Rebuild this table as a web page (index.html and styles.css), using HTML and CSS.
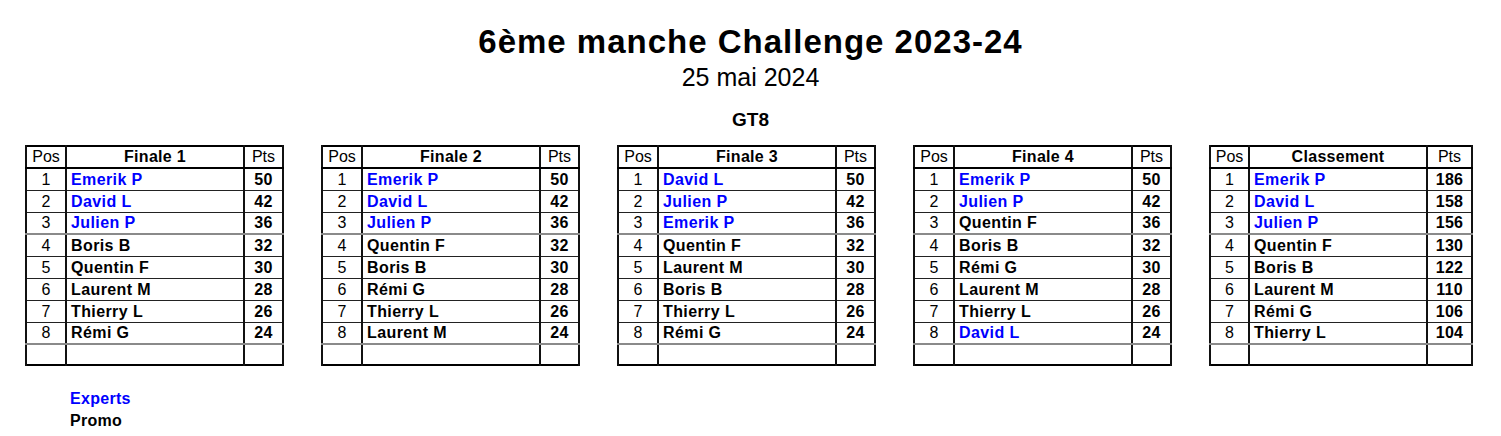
FILE: index.html
```html
<!DOCTYPE html>
<html lang="fr">
<head>
<meta charset="utf-8">
<title>6ème manche Challenge 2023-24</title>
<link rel="stylesheet" href="styles.css">
</head>
<body>
<header class="head">
  <h1 class="title">6ème manche Challenge 2023-24</h1>
  <p class="date">25 mai 2024</p>
  <h2 class="cat">GT8</h2>
</header>
<main class="tables">
  <table class="rank">
    <colgroup><col class="c-pos"><col class="c-name"><col class="c-pts"></colgroup>
    <thead><tr><th class="pos">Pos</th><th class="name">Finale 1</th><th class="pts">Pts</th></tr></thead>
    <tbody>
      <tr><td class="pos">1</td><td class="name exp">Emerik P</td><td class="pts">50</td></tr>
      <tr><td class="pos">2</td><td class="name exp">David L</td><td class="pts">42</td></tr>
      <tr class="sep"><td class="pos">3</td><td class="name exp">Julien P</td><td class="pts">36</td></tr>
      <tr><td class="pos">4</td><td class="name">Boris B</td><td class="pts">32</td></tr>
      <tr><td class="pos">5</td><td class="name">Quentin F</td><td class="pts">30</td></tr>
      <tr><td class="pos">6</td><td class="name">Laurent M</td><td class="pts">28</td></tr>
      <tr><td class="pos">7</td><td class="name">Thierry L</td><td class="pts">26</td></tr>
      <tr class="sep"><td class="pos">8</td><td class="name">Rémi G</td><td class="pts">24</td></tr>
      <tr class="blank"><td class="pos"></td><td class="name"></td><td class="pts"></td></tr>
    </tbody>
  </table>
  <table class="rank">
    <colgroup><col class="c-pos"><col class="c-name"><col class="c-pts"></colgroup>
    <thead><tr><th class="pos">Pos</th><th class="name">Finale 2</th><th class="pts">Pts</th></tr></thead>
    <tbody>
      <tr><td class="pos">1</td><td class="name exp">Emerik P</td><td class="pts">50</td></tr>
      <tr><td class="pos">2</td><td class="name exp">David L</td><td class="pts">42</td></tr>
      <tr class="sep"><td class="pos">3</td><td class="name exp">Julien P</td><td class="pts">36</td></tr>
      <tr><td class="pos">4</td><td class="name">Quentin F</td><td class="pts">32</td></tr>
      <tr><td class="pos">5</td><td class="name">Boris B</td><td class="pts">30</td></tr>
      <tr><td class="pos">6</td><td class="name">Rémi G</td><td class="pts">28</td></tr>
      <tr><td class="pos">7</td><td class="name">Thierry L</td><td class="pts">26</td></tr>
      <tr class="sep"><td class="pos">8</td><td class="name">Laurent M</td><td class="pts">24</td></tr>
      <tr class="blank"><td class="pos"></td><td class="name"></td><td class="pts"></td></tr>
    </tbody>
  </table>
  <table class="rank">
    <colgroup><col class="c-pos"><col class="c-name"><col class="c-pts"></colgroup>
    <thead><tr><th class="pos">Pos</th><th class="name">Finale 3</th><th class="pts">Pts</th></tr></thead>
    <tbody>
      <tr><td class="pos">1</td><td class="name exp">David L</td><td class="pts">50</td></tr>
      <tr><td class="pos">2</td><td class="name exp">Julien P</td><td class="pts">42</td></tr>
      <tr class="sep"><td class="pos">3</td><td class="name exp">Emerik P</td><td class="pts">36</td></tr>
      <tr><td class="pos">4</td><td class="name">Quentin F</td><td class="pts">32</td></tr>
      <tr><td class="pos">5</td><td class="name">Laurent M</td><td class="pts">30</td></tr>
      <tr><td class="pos">6</td><td class="name">Boris B</td><td class="pts">28</td></tr>
      <tr><td class="pos">7</td><td class="name">Thierry L</td><td class="pts">26</td></tr>
      <tr class="sep"><td class="pos">8</td><td class="name">Rémi G</td><td class="pts">24</td></tr>
      <tr class="blank"><td class="pos"></td><td class="name"></td><td class="pts"></td></tr>
    </tbody>
  </table>
  <table class="rank">
    <colgroup><col class="c-pos"><col class="c-name"><col class="c-pts"></colgroup>
    <thead><tr><th class="pos">Pos</th><th class="name">Finale 4</th><th class="pts">Pts</th></tr></thead>
    <tbody>
      <tr><td class="pos">1</td><td class="name exp">Emerik P</td><td class="pts">50</td></tr>
      <tr><td class="pos">2</td><td class="name exp">Julien P</td><td class="pts">42</td></tr>
      <tr class="sep"><td class="pos">3</td><td class="name">Quentin F</td><td class="pts">36</td></tr>
      <tr><td class="pos">4</td><td class="name">Boris B</td><td class="pts">32</td></tr>
      <tr><td class="pos">5</td><td class="name">Rémi G</td><td class="pts">30</td></tr>
      <tr><td class="pos">6</td><td class="name">Laurent M</td><td class="pts">28</td></tr>
      <tr><td class="pos">7</td><td class="name">Thierry L</td><td class="pts">26</td></tr>
      <tr class="sep"><td class="pos">8</td><td class="name exp">David L</td><td class="pts">24</td></tr>
      <tr class="blank"><td class="pos"></td><td class="name"></td><td class="pts"></td></tr>
    </tbody>
  </table>
  <table class="rank total">
    <colgroup><col class="c-pos"><col class="c-name"><col class="c-pts"></colgroup>
    <thead><tr><th class="pos">Pos</th><th class="name">Classement</th><th class="pts">Pts</th></tr></thead>
    <tbody>
      <tr><td class="pos">1</td><td class="name exp">Emerik P</td><td class="pts">186</td></tr>
      <tr><td class="pos">2</td><td class="name exp">David L</td><td class="pts">158</td></tr>
      <tr class="sep"><td class="pos">3</td><td class="name exp">Julien P</td><td class="pts">156</td></tr>
      <tr><td class="pos">4</td><td class="name">Quentin F</td><td class="pts">130</td></tr>
      <tr><td class="pos">5</td><td class="name">Boris B</td><td class="pts">122</td></tr>
      <tr><td class="pos">6</td><td class="name">Laurent M</td><td class="pts">110</td></tr>
      <tr><td class="pos">7</td><td class="name">Rémi G</td><td class="pts">106</td></tr>
      <tr class="sep"><td class="pos">8</td><td class="name">Thierry L</td><td class="pts">104</td></tr>
      <tr class="blank"><td class="pos"></td><td class="name"></td><td class="pts"></td></tr>
    </tbody>
  </table>
</main>
<footer class="legend">
  <div class="exp">Experts</div>
  <div>Promo</div>
</footer>
</body>
</html>
```
FILE: styles.css
```css
html, body {
  margin: 0;
  padding: 0;
  background: #fff;
}
body {
  font-family: "Liberation Sans", Arial, sans-serif;
  color: #000;
  width: 1501px;
  height: 436px;
  overflow: hidden;
}
.head {
  text-align: center;
  padding-top: 24px;
}
.title {
  margin: 0;
  font-size: 33px;
  line-height: 36px;
  letter-spacing: 1px;
  font-weight: bold;
}
.date {
  margin: 3px 0 0;
  font-size: 25px;
  line-height: 28px;
}
.cat {
  margin: 18px 0 0;
  font-size: 19px;
  line-height: 22px;
  font-weight: bold;
}
.tables {
  display: flex;
  gap: 37px;
  padding-left: 25px;
  margin-top: 14px;
  align-items: flex-start;
}
.rank {
  border-collapse: collapse;
  table-layout: fixed;
  width: 257px;
  border: 2px solid #000;
  font-size: 16px;
}
.rank.total {
  width: 262px;
}
.rank col.c-pos { width: 40px; }
.rank col.c-name { width: 178px; }
.rank col.c-pts { width: 39px; }
.rank.total col.c-pos { width: 39px; }
.rank.total col.c-pts { width: 45px; }
.rank th, .rank td {
  padding: 0;
  height: 21px;
  line-height: 20px;
  border-left: 2px solid #111;
  border-right: 2px solid #111;
  border-bottom: 1px solid #222;
  white-space: nowrap;
  overflow: hidden;
}
.rank th {
  height: 20px;
  border-bottom: 2px solid #000;
}
.rank tr.sep td {
  height: 20px;
  border-bottom: 2px solid #8a8a8a;
}
.rank tr.blank td {
  height: 19px;
}
.rank th.pos, .rank td.pos {
  text-align: center;
  font-weight: normal;
}
.rank th.name {
  text-align: center;
  font-weight: bold;
  letter-spacing: 0.3px;
}
.rank td.name {
  text-align: left;
  padding-left: 4px;
  font-weight: bold;
  letter-spacing: 0.4px;
}
.rank th.pts {
  text-align: center;
  font-weight: normal;
}
.rank td.pts {
  text-align: center;
  font-weight: bold;
  letter-spacing: 0.3px;
}
.exp {
  color: #0000ff;
}
.legend {
  margin-top: 22px;
  padding-left: 70px;
  font-size: 16px;
  line-height: 22px;
  letter-spacing: 0.3px;
  font-weight: bold;
}
```
